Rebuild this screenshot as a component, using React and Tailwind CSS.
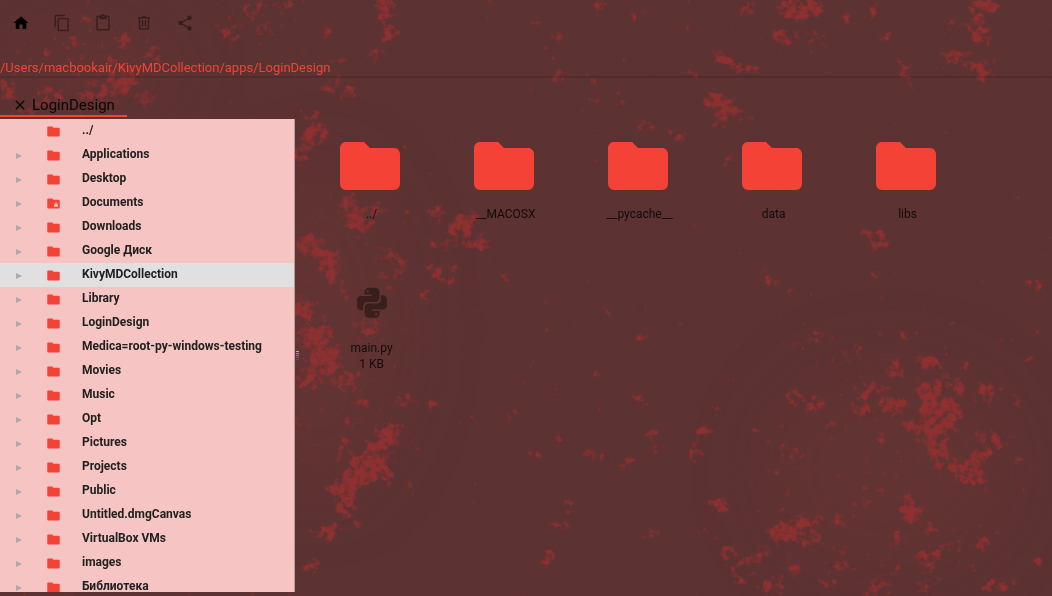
import React from "react";

const PATHS = {
  home: "M10,20V14H14V20H19V12H22L12,3L2,12H5V20H10Z",
  copy: "M19,21H8V7H19M19,5H8A2,2 0 0,0 6,7V21A2,2 0 0,0 8,23H19A2,2 0 0,0 21,21V7A2,2 0 0,0 19,5M16,1H4A2,2 0 0,0 2,3V17H4V3H16V1Z",
  paste:
    "M19,20H5V4H7V7H17V4H19M12,2A1,1 0 0,1 13,3A1,1 0 0,1 12,4A1,1 0 0,1 11,3A1,1 0 0,1 12,2M19,2H14.82C14.4,0.84 13.3,0 12,0C10.7,0 9.6,0.84 9.18,2H5A2,2 0 0,0 3,4V20A2,2 0 0,0 5,22H19A2,2 0 0,0 21,20V4A2,2 0 0,0 19,2Z",
  trash:
    "M9,3V4H4V6H5V19A2,2 0 0,0 7,21H17A2,2 0 0,0 19,19V6H20V4H15V3H9M7,6H17V19H7V6M9,8V17H11V8H9M13,8V17H15V8H13Z",
  share:
    "M18,16.08C17.24,16.08 16.56,16.38 16.04,16.85L8.91,12.7C8.96,12.47 9,12.24 9,12C9,11.76 8.96,11.53 8.91,11.3L15.96,7.19C16.5,7.69 17.21,8 18,8A3,3 0 0,0 21,5A3,3 0 0,0 18,2A3,3 0 0,0 15,5C15,5.24 15.04,5.47 15.09,5.7L8.04,9.81C7.5,9.31 6.79,9 6,9A3,3 0 0,0 3,12A3,3 0 0,0 6,15C6.79,15 7.5,14.69 8.04,14.19L15.16,18.34C15.11,18.55 15.08,18.77 15.08,19C15.08,20.61 16.39,21.91 18,21.91C19.61,21.91 20.92,20.61 20.92,19A2.92,2.92 0 0,0 18,16.08Z",
  close:
    "M19,6.41L17.59,5L12,10.59L6.41,5L5,6.41L10.59,12L5,17.59L6.41,19L12,13.41L17.59,19L19,17.59L13.41,12L19,6.41Z",
  folder:
    "M10,4H4C2.89,4 2,4.89 2,6V18A2,2 0 0,0 4,20H20A2,2 0 0,0 22,18V8C22,6.89 21.1,6 20,6H12L10,4Z",
  folderLock:
    "M20,6A2,2 0 0,1 22,8V18A2,2 0 0,1 20,20H4A2,2 0 0,1 2,18V6A2,2 0 0,1 4,4H10L12,6H20M19,17V13H18V12A2,2 0 0,0 16,10A2,2 0 0,0 14,12V13H13V17H19M16,11A1,1 0 0,1 17,12V13H15V12A1,1 0 0,1 16,11Z",
  python:
    "M19.14,7.5A2.86,2.86 0 0,1 22,10.36V14.14A2.86,2.86 0 0,1 19.14,17H12C12,17.39 12.32,17.96 12.71,17.96H17V19.64A2.86,2.86 0 0,1 14.14,22.5H9.86A2.86,2.86 0 0,1 7,19.64V15.89C7,14.31 8.28,13.04 9.86,13.04H15.11C16.69,13.04 17.96,11.76 17.96,10.18V7.5H19.14M14.86,19.29C14.46,19.29 14.14,19.59 14.14,20.18C14.14,20.77 14.46,20.89 14.86,20.89A0.71,0.71 0 0,0 15.57,20.18C15.57,19.59 15.25,19.29 14.86,19.29M4.86,17.5C3.28,17.5 2,16.22 2,14.64V10.86C2,9.28 3.28,8 4.86,8H12C12,7.61 11.68,7.04 11.29,7.04H7V5.36C7,3.78 8.28,2.5 9.86,2.5H14.14C15.72,2.5 17,3.78 17,5.36V9.11C17,10.69 15.72,11.96 14.14,11.96H8.89C7.31,11.96 6.04,13.24 6.04,14.82V17.5H4.86M9.14,5.71C9.54,5.71 9.86,5.41 9.86,4.82C9.86,4.23 9.54,4.11 9.14,4.11A0.71,0.71 0 0,0 8.43,4.82C8.43,5.41 8.75,5.71 9.14,5.71Z",
};

function Icon({ name, className }) {
  return (
    <svg viewBox="0 0 24 24" fill="currentColor" aria-hidden="true" className={className}>
      <path d={PATHS[name]} />
    </svg>
  );
}

// Wallpaper patches: centre x, centre y, radius x, radius y, density, rotation.
const PATCHES = [
  [95, 5, 6, 5, 0.7, 0], [85, 20, 8, 8, 0.5, 0], [22, 25, 8, 10, 0.4, 0],
  [75, 42, 12, 6, 0.6, 0], [48, 52, 8, 4, 0.7, 20], [125, 42, 9, 9, 0.8, -50],
  [152, 55, 10, 8, 0.7, 0], [100, 65, 40, 10, 0.45, 0], [120, 85, 20, 12, 0.85, -30],
  [90, 92, 14, 10, 0.7, 0], [50, 95, 14, 10, 0.7, 0], [8, 90, 10, 12, 0.8, 0],
  [145, 100, 8, 10, 0.7, 0], [25, 112, 20, 6, 0.5, 0],
  [255, 10, 14, 8, 0.65, 0], [285, 8, 10, 8, 0.75, 0], [262, 30, 14, 6, 0.7, 0],
  [230, 30, 10, 12, 0.65, 0], [328, 30, 6, 10, 0.8, 0], [340, 62, 6, 6, 0.7, 0],
  [330, 85, 10, 12, 0.55, 0], [345, 92, 8, 8, 0.6, 0], [310, 115, 12, 8, 0.6, 0],
  [385, 8, 10, 12, 1, 0], [388, 32, 12, 10, 0.85, 30], [376, 52, 8, 8, 0.75, 0],
  [368, 66, 8, 5, 0.5, 0], [352, 90, 5, 8, 0.6, 0],
  [492, 3, 8, 4, 0.7, 0], [476, 45, 4, 5, 0.6, 0], [537, 23, 6, 5, 0.85, 0],
  [556, 35, 7, 9, 0.7, 0], [548, 55, 5, 8, 0.65, 0], [558, 77, 9, 8, 0.95, 0],
  [532, 90, 6, 3, 0.6, 0], [600, 6, 7, 7, 0.85, 0], [637, 16, 9, 8, 0.75, 0],
  [618, 62, 7, 4, 0.6, 0], [680, 30, 12, 6, 0.55, 0], [694, 70, 6, 10, 0.55, 0],
  [590, 82, 6, 12, 0.5, 0], [596, 98, 8, 8, 0.65, 0], [620, 98, 5, 8, 0.6, 0],
  [645, 125, 14, 6, 0.8, 25], [677, 135, 12, 6, 0.9, 20], [694, 125, 8, 4, 0.6, -30],
  [597, 160, 6, 5, 0.6, 0],
  [745, 11, 9, 9, 0.75, 0], [800, 8, 26, 12, 0.9, 0], [782, 38, 12, 8, 0.85, 20],
  [812, 38, 14, 8, 0.5, 0], [722, 58, 14, 6, 0.95, 40], [745, 69, 20, 5, 0.9, 15],
  [723, 106, 20, 14, 0.8, 30], [706, 100, 6, 10, 0.75, 0], [718, 128, 5, 12, 0.75, 0],
  [728, 158, 8, 7, 0.8, 0], [745, 122, 8, 6, 0.6, 0], [850, 16, 8, 8, 0.65, 0],
  [872, 10, 6, 12, 0.75, 0], [886, 35, 8, 6, 0.8, 30], [903, 70, 6, 14, 0.75, -20],
  [912, 86, 6, 4, 0.7, 0], [985, 6, 18, 7, 0.95, 0], [978, 28, 10, 16, 0.85, 0],
  [950, 24, 9, 6, 0.75, 0], [955, 58, 16, 8, 0.8, 20], [980, 70, 12, 12, 0.85, 0],
  [985, 45, 8, 6, 0.6, 0],
  [315, 135, 14, 12, 0.95, 0], [303, 155, 10, 10, 0.9, 0], [420, 130, 10, 7, 0.5, 0],
  [410, 145, 6, 5, 0.5, 0], [350, 205, 12, 10, 0.75, 0], [358, 222, 16, 12, 0.85, 0],
  [376, 208, 8, 8, 0.8, 0], [408, 215, 6, 6, 0.8, 0], [437, 212, 9, 8, 0.8, 0],
  [462, 224, 18, 9, 1, -20], [470, 240, 18, 8, 0.75, 0], [440, 245, 12, 5, 0.75, 0],
  [485, 246, 10, 6, 0.7, 0], [310, 245, 14, 12, 0.95, 0], [328, 265, 12, 18, 0.95, -15],
  [342, 292, 5, 10, 0.9, 0], [390, 255, 14, 7, 0.75, 15], [400, 268, 8, 8, 0.75, 0],
  [384, 280, 8, 6, 0.8, 0], [440, 275, 16, 8, 0.7, 30], [425, 295, 10, 8, 0.65, 0],
  [507, 276, 5, 8, 0.75, 0], [455, 268, 8, 5, 0.6, 0],
  [302, 310, 12, 12, 1, 0], [315, 335, 18, 12, 0.95, -20], [325, 360, 18, 16, 1, -40],
  [308, 380, 14, 10, 0.9, 0], [345, 382, 14, 10, 0.8, -30], [362, 400, 6, 10, 0.8, 0],
  [370, 328, 14, 8, 0.7, 0], [360, 315, 6, 6, 0.7, 0], [405, 400, 10, 6, 0.75, 0],
  [436, 405, 10, 5, 0.65, 0], [300, 425, 8, 6, 0.5, 0], [352, 422, 6, 6, 0.7, 0],
  [390, 435, 12, 12, 0.95, 40], [378, 450, 12, 16, 0.95, 20], [362, 470, 18, 16, 1, -40],
  [386, 475, 8, 12, 0.9, 0], [342, 490, 14, 12, 1, 30], [347, 505, 12, 12, 0.9, 0],
  [328, 532, 16, 8, 0.95, -20], [355, 525, 8, 6, 0.75, 0], [312, 565, 12, 8, 0.75, -40],
  [303, 577, 6, 5, 0.7, 0], [412, 488, 6, 10, 0.5, 0], [420, 450, 4, 8, 0.5, 0],
  [342, 446, 6, 12, 0.75, 0],
  [606, 312, 5, 5, 0.85, 0], [547, 305, 6, 6, 0.5, 0], [546, 332, 5, 6, 0.6, 0],
  [575, 323, 5, 4, 0.6, 0], [636, 305, 6, 5, 0.6, 0], [644, 335, 8, 8, 0.65, 0],
  [535, 366, 4, 4, 0.8, 0], [598, 373, 7, 4, 0.65, 15], [555, 389, 4, 7, 0.8, 0],
  [510, 414, 7, 6, 0.85, 0], [540, 408, 6, 3, 0.6, 0], [598, 411, 7, 3, 0.6, 0],
  [640, 400, 8, 9, 0.75, 0], [652, 434, 8, 6, 0.85, 0], [537, 455, 10, 6, 0.65, 25],
  [560, 438, 6, 6, 0.65, 0], [593, 455, 12, 7, 0.75, 25], [628, 462, 14, 6, 0.75, -15],
  [655, 450, 12, 5, 0.65, -20], [570, 505, 5, 12, 0.75, 20], [560, 525, 10, 6, 0.7, 0],
  [548, 558, 7, 16, 0.75, 20], [573, 550, 4, 6, 0.75, 0], [650, 533, 10, 7, 0.75, 0],
  [553, 494, 8, 4, 0.6, 20], [480, 478, 16, 3, 0.4, 5], [472, 418, 8, 4, 0.4, 0],
  [878, 240, 13, 10, 0.8, 0], [866, 233, 5, 5, 0.7, 0], [884, 262, 4, 5, 0.65, 0],
  [875, 278, 6, 6, 0.6, 0], [768, 278, 14, 6, 0.75, 45], [790, 290, 14, 6, 0.6, 20],
  [784, 268, 10, 4, 0.5, 0], [993, 243, 4, 6, 0.6, 0], [1016, 201, 4, 3, 0.7, 0],
  [1035, 284, 14, 6, 0.65, 0], [1025, 265, 5, 5, 0.5, 0], [1048, 240, 4, 5, 0.6, 0],
  [684, 326, 5, 5, 0.7, 0], [693, 316, 5, 4, 0.55, 0], [705, 334, 5, 4, 0.55, 0],
  [820, 338, 12, 7, 0.7, 0], [795, 343, 14, 8, 0.55, 0], [854, 352, 8, 5, 0.75, 0],
  [880, 334, 7, 5, 0.65, 0], [905, 336, 8, 5, 0.65, 0], [954, 323, 6, 3, 0.75, 20],
  [1040, 336, 8, 3, 0.7, 30], [1030, 360, 10, 3, 0.75, 25], [1005, 345, 10, 5, 0.45, 0],
  [930, 362, 12, 8, 1, 20], [964, 365, 6, 5, 0.7, 0], [893, 368, 10, 12, 0.7, 0],
  [870, 390, 14, 8, 0.85, 0], [862, 408, 8, 12, 0.9, 0], [893, 405, 14, 10, 0.9, 0],
  [928, 390, 12, 12, 0.95, 0], [940, 410, 22, 14, 0.95, 0], [930, 426, 30, 7, 1, 0],
  [935, 445, 14, 12, 0.95, 20], [955, 385, 18, 8, 0.8, 20], [988, 392, 12, 10, 0.85, 0],
  [1005, 375, 8, 4, 0.75, 0], [1020, 402, 10, 5, 0.6, -20], [945, 462, 16, 8, 0.75, 20],
  [985, 438, 16, 6, 0.85, 0], [1000, 445, 8, 8, 0.85, 0], [978, 458, 14, 8, 0.9, -30],
  [968, 474, 18, 9, 0.95, 10], [983, 490, 6, 6, 0.75, 0], [1020, 460, 8, 8, 0.5, 0],
  [814, 405, 9, 8, 0.95, 0], [794, 396, 8, 8, 0.75, 0], [832, 428, 5, 7, 0.75, 0],
  [726, 378, 6, 6, 0.65, 0], [715, 408, 5, 6, 0.8, 0], [703, 430, 9, 8, 0.85, -30],
  [695, 452, 8, 12, 0.75, 20], [675, 444, 7, 4, 0.65, 0], [755, 431, 4, 5, 0.8, 0],
  [768, 442, 4, 6, 0.65, 0], [792, 454, 12, 6, 0.8, 20], [776, 470, 10, 6, 0.6, 0],
  [790, 497, 6, 5, 0.75, 0], [880, 440, 6, 6, 0.65, 0], [897, 451, 5, 3, 0.75, 0],
  [720, 503, 10, 10, 0.85, -40], [705, 525, 8, 6, 0.6, 0], [863, 503, 10, 5, 0.8, 0],
  [878, 495, 5, 4, 0.75, 0], [860, 485, 8, 3, 0.75, 0], [806, 521, 16, 7, 0.9, 0],
  [785, 532, 18, 10, 1, -10], [812, 540, 16, 6, 0.85, -20], [837, 520, 10, 6, 0.85, -30],
  [750, 560, 22, 5, 0.9, -25], [728, 552, 10, 8, 0.75, 0], [740, 580, 10, 6, 0.7, 0],
  [768, 585, 16, 6, 0.95, -20], [795, 570, 8, 8, 0.85, 0], [780, 592, 8, 4, 0.8, 0],
  [912, 512, 12, 12, 0.95, 40], [905, 500, 6, 8, 0.8, 0], [930, 530, 8, 8, 0.8, -30],
  [898, 539, 10, 5, 0.85, 0], [925, 560, 12, 8, 0.85, 40], [940, 552, 16, 5, 0.75, -25],
  [982, 543, 7, 9, 0.8, 0], [975, 565, 8, 4, 0.7, 0], [896, 566, 4, 6, 0.75, 0],
  [880, 585, 14, 8, 0.75, 30], [840, 566, 14, 6, 0.65, 0], [830, 585, 10, 7, 0.7, 0],
  [925, 588, 14, 6, 0.7, 0], [1000, 585, 20, 9, 0.75, 0], [1038, 562, 9, 5, 0.75, -30],
  [867, 595, 10, 4, 0.85, 0], [958, 545, 8, 5, 0.65, 0], [838, 548, 6, 6, 0.65, 0],
  [20, 594, 60, 3, 0.5, 0], [220, 594, 80, 3, 0.4, 0],
  // Wide, thin clouds that scatter faint specks between the dense patches.
  [335, 260, 70, 90, 0.12, 0], [350, 400, 80, 90, 0.12, 20], [900, 420, 130, 80, 0.12, 0],
  [850, 545, 170, 50, 0.12, 0], [90, 70, 90, 50, 0.15, 0], [270, 30, 70, 40, 0.12, 0],
  [790, 30, 80, 40, 0.1, 0], [970, 50, 40, 50, 0.12, 0], [460, 250, 60, 50, 0.1, 0],
];

function Wallpaper() {
  return (
    <svg
      viewBox="0 0 1052 596"
      preserveAspectRatio="xMidYMid slice"
      aria-hidden="true"
      className="absolute inset-0 -z-10 h-full w-full"
    >
      <defs>
        <filter id="glow" x="-50%" y="-50%" width="200%" height="200%">
          <feGaussianBlur stdDeviation="35" />
        </filter>
        <filter
          id="rust"
          filterUnits="userSpaceOnUse"
          x="0"
          y="0"
          width="1052"
          height="596"
          colorInterpolationFilters="sRGB"
        >
          <feGaussianBlur in="SourceAlpha" stdDeviation="3" result="mask" />
          <feTurbulence type="fractalNoise" baseFrequency="0.14" numOctaves="4" seed="11" result="noise" />
          <feComposite in="mask" in2="noise" operator="arithmetic" k1="0" k2="0.82" k3="1.5" k4="-1.14" result="mix" />
          <feComponentTransfer in="mix" result="cut">
            <feFuncA type="linear" slope="2.2" intercept="0" />
          </feComponentTransfer>
          <feFlood floodColor="#8e3030" result="ink" />
          <feComposite in="ink" in2="cut" operator="in" />
        </filter>
      </defs>
      <rect width="1052" height="596" fill="#5c3232" />
      <g filter="url(#glow)" fill="#6a3535" opacity="0.4">
        <ellipse cx="320" cy="330" rx="90" ry="170" />
        <ellipse cx="890" cy="470" rx="130" ry="110" />
        <ellipse cx="90" cy="70" rx="90" ry="50" />
      </g>
      <g filter="url(#rust)">
        {PATCHES.map(([x, y, rx, ry, density, turn], i) => (
          <ellipse
            key={i}
            cx={x}
            cy={y}
            rx={rx}
            ry={ry}
            fillOpacity={density}
            transform={`rotate(${turn} ${x} ${y})`}
          />
        ))}
      </g>
    </svg>
  );
}

const TOOLS = [
  { icon: "home", label: "Home", enabled: true },
  { icon: "copy", label: "Copy" },
  { icon: "paste", label: "Paste" },
  { icon: "trash", label: "Delete" },
  { icon: "share", label: "Share" },
];

const TREE = [
  { name: "../", up: true },
  { name: "Applications" },
  { name: "Desktop" },
  { name: "Documents", icon: "folderLock" },
  { name: "Downloads" },
  { name: "Google Диск" },
  { name: "KivyMDCollection", selected: true },
  { name: "Library" },
  { name: "LoginDesign" },
  { name: "Medica=root-py-windows-testing" },
  { name: "Movies" },
  { name: "Music" },
  { name: "Opt" },
  { name: "Pictures" },
  { name: "Projects" },
  { name: "Public" },
  { name: "Untitled.dmgCanvas" },
  { name: "VirtualBox VMs" },
  { name: "images" },
  { name: "Библиотека" },
];

const FILES = [
  { name: "../" },
  { name: "__MACOSX" },
  { name: "__pycache__" },
  { name: "data" },
  { name: "libs" },
  { name: "main.py", size: "1 KB" },
];

function TreeRow({ item }) {
  return (
    <li className={item.selected ? "bg-[#e0e0e0]" : ""}>
      <button type="button" className="flex h-6 w-full items-center text-left">
        <span className="flex w-[46px] shrink-0 pt-px pl-4">
          {!item.up && (
            <svg viewBox="0 0 6 6" className="size-[6px] text-[#a9a9a9]" aria-hidden="true">
              <path d="M0 0L6 3L0 6Z" fill="currentColor" />
            </svg>
          )}
        </span>
        <Icon name={item.icon || "folder"} className="size-[15px] shrink-0 text-[#f44336]" />
        <span className="truncate pb-[2px] pl-[21px] text-xs leading-4 font-bold text-[#212121]">
          {item.name}
        </span>
      </button>
    </li>
  );
}

function FileTile({ item }) {
  const isFile = Boolean(item.size);
  return (
    <button type="button" className="flex h-[134px] flex-col items-center">
      <span className="flex h-[78px] items-center justify-center">
        {isFile ? (
          <Icon name="python" className="mt-1 size-9 text-black/40" />
        ) : (
          <Icon name="folder" className="mr-[3px] size-[72px] text-[#f44336]" />
        )}
      </span>
      <span className="pt-px text-xs leading-4 text-black/80">
        {item.name}
        {isFile && <span className="block">{item.size}</span>}
      </span>
    </button>
  );
}

export default function App() {
  return (
    <div className="relative isolate flex h-screen flex-col overflow-hidden pb-1 font-['Roboto','Noto_Sans',sans-serif]">
      <Wallpaper />
      <header className="shrink-0">
        <div className="flex h-[46px] items-center">
          {TOOLS.map((tool) => (
            <button
              key={tool.icon}
              type="button"
              aria-label={tool.label}
              disabled={!tool.enabled}
              className="flex h-10 w-[41px] items-center justify-center text-black disabled:text-black/40"
            >
              <Icon name={tool.icon} className="size-[18px]" />
            </button>
          ))}
        </div>
        <p className="flex h-8 items-center border-b-2 border-black/10 pt-[14px] text-[13px] leading-4 text-[#f44336]">
          /Users/macbookair/KivyMDCollection/apps/LoginDesign
        </p>
      </header>

      <nav className="flex h-[41px] shrink-0 items-end pb-[2px]">
        <div className="flex h-6 items-center gap-1 border-b-2 border-[#f44336] px-3 pt-[2px] text-black/90">
          <button type="button" aria-label="Close tab">
            <Icon name="close" className="size-4" />
          </button>
          <a href="#LoginDesign" className="text-[15px] leading-5">
            LoginDesign
          </a>
        </div>
      </nav>

      <div className="flex min-h-0 flex-1">
        <aside className="w-[28%] shrink-0 overflow-hidden border-r border-[#b09a9a] bg-[#f6c4c3]">
          <ul>
            {TREE.map((item) => (
              <TreeRow key={item.name} item={item} />
            ))}
          </ul>
        </aside>
        <div
          role="separator"
          aria-orientation="vertical"
          className="flex w-[5px] shrink-0 flex-col items-center justify-center gap-px"
        >
          <span className="h-px w-[3px] bg-[#8fb3bf]" />
          <span className="h-px w-[3px] bg-[#6d9fb0]" />
          <span className="h-px w-[3px] bg-[#5a91a5]" />
          <span className="h-px w-[3px] bg-[#3f7485]" />
          <span className="h-px w-[3px] bg-[#2f5f6d]" />
        </div>
        <main className="grid flex-1 auto-rows-max grid-cols-[repeat(auto-fill,134px)] overflow-hidden pt-2 pl-[5px]">
          {FILES.map((item) => (
            <FileTile key={item.name} item={item} />
          ))}
        </main>
      </div>
    </div>
  );
}
